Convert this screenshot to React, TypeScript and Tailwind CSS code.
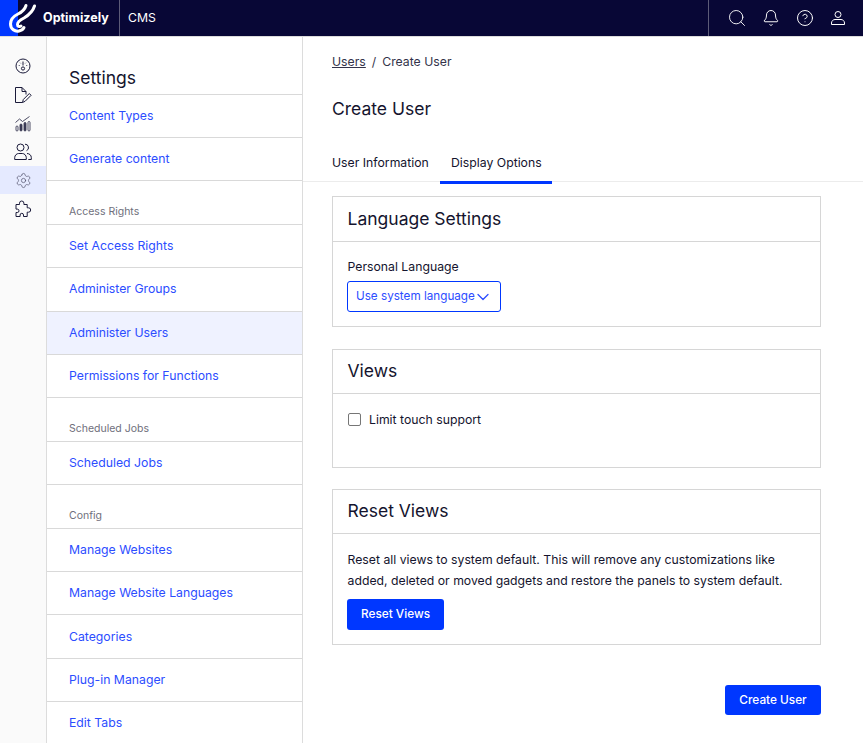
import { Bell, ChevronDown, CircleHelp, Search, Settings } from 'lucide-react'

type NavRow = { label: string; kind?: 'section' | 'active' }

const navRows: NavRow[] = [
  { label: 'Content Types' },
  { label: 'Generate content' },
  { label: 'Access Rights', kind: 'section' },
  { label: 'Set Access Rights' },
  { label: 'Administer Groups' },
  { label: 'Administer Users', kind: 'active' },
  { label: 'Permissions for Functions' },
  { label: 'Scheduled Jobs', kind: 'section' },
  { label: 'Scheduled Jobs' },
  { label: 'Config', kind: 'section' },
  { label: 'Manage Websites' },
  { label: 'Manage Website Languages' },
  { label: 'Categories' },
  { label: 'Plug-in Manager' },
  { label: 'Edit Tabs' },
]

function Logo() {
  return (
    <svg width="36" height="36" viewBox="0 0 36 36" fill="none" stroke="#fff" strokeLinecap="round" strokeWidth="3">
      <path d="M26 5.500C25 9 22 12 18 14C13 16.500 10.500 20 10.500 24C10.500 29 15 32 19 31C21 30.500 23 29.500 24 27.500" />
      <path d="M34.500 6C33 11 29 15 24 18C20 20 17.500 22 17.500 24.500C17.500 26.500 19.500 27 21 26" />
    </svg>
  )
}

function GaugeIcon() {
  return (
    <svg width="16" height="16" viewBox="0 0 16 16" fill="none" stroke="#1a1a3a" strokeWidth="1">
      <circle cx="8" cy="8" r="7" />
      <circle cx="8" cy="10.500" r="1.600" />
      <path d="M8 3.500v4M3.800 7.500h.8M11.400 7.500h.8M5.200 4.800l.5.500M10.800 4.800l-.5.500" />
    </svg>
  )
}

function EditFileIcon() {
  return (
    <svg width="18" height="18" viewBox="0 0 18 18" fill="none" stroke="#1a1a3a" strokeWidth="1">
      <path d="M8.500 16.500H1.500V1.500H8L12 5.500V8.500" />
      <path d="M8 1.500V5.500H12" />
      <path d="M8.500 16.500l.8-3 6-6 1.800 1.800-6 6z" />
    </svg>
  )
}

function ChartIcon() {
  return (
    <svg width="16" height="16" viewBox="0 0 16 16" fill="none" stroke="#3a3a55" strokeWidth="0.9">
      <path d="M.5 6.500l4-3.500 3 2.500L14.500.5" />
      <rect x="1" y="10" width="2" height="5" rx="1" />
      <rect x="5" y="8" width="2" height="7" rx="1" fill="#3a3a55" />
      <rect x="9" y="6.500" width="2" height="8.500" rx="1" fill="#3a3a55" />
      <rect x="13" y="5.500" width="2" height="9.500" rx="1" />
    </svg>
  )
}

function UsersIcon() {
  return (
    <svg width="18" height="18" viewBox="0 0 18 18" fill="none" stroke="#1a1a3a" strokeWidth="1">
      <circle cx="6.500" cy="4.500" r="3.500" />
      <path d="M11 1.200a3.400 3.400 0 0 1 1.500 6.500" />
      <path d="M.7 16.500v-1.800c0-2.400 2-4.200 4-4.200h3.600c2 0 4 1.800 4 4.200v1.800z" />
      <path d="M13 10.500c2.500 0 4.300 1.800 4.300 4v2h-3" />
    </svg>
  )
}

function PuzzleIcon() {
  return (
    <svg width="17" height="17" viewBox="0 0 17 17" fill="none" stroke="#1a1a3a" strokeWidth="1">
      <path d="M1 4.500h3.500V3.200a2.200 2.200 0 0 1 4.400 0v1.300h3.300v3.300h1.300a2.200 2.200 0 0 1 0 4.400h-1.300v4.300H8.500v-1.500a1.700 1.700 0 0 0-3.400 0v1.500H1v-4h1.300a1.700 1.700 0 0 0 0-3.400H1z" />
    </svg>
  )
}

function UserIcon() {
  return (
    <svg width="16" height="16" viewBox="0 0 16 16" fill="none" stroke="#fff" strokeWidth="1" className="shrink-0 ml-[15.500px]">
      <circle cx="8" cy="4.500" r="3" />
      <path d="M1.500 14.500v-1.500c0-2 1.700-3.500 3.500-3.500h6c1.800 0 3.500 1.500 3.500 3.500v1.500z" />
    </svg>
  )
}

function TopBar() {
  return (
    <header className="h-[37px] shrink-0 flex bg-[#080736] border-b border-[#dcdcdc] text-white">
      <div className="w-[18px] bg-[#0037ff]" />
      <div className="-ml-[18px] w-[36px] h-[36px] relative">
        <Logo />
      </div>
      <div className="w-[76px] ml-[7px] flex items-center text-[12.500px] font-bold">Optimizely</div>
      <div className="w-[1px] bg-[#5c5b78]" />
      <div className="ml-2 flex items-center text-[12.250px]">CMS</div>
      <div className="ml-auto w-[155px] border-l border-[#5c5b78] flex items-center pl-[18px]">
        <Search size={20} strokeWidth={1.1} className="shrink-0" />
        <Bell size={18} strokeWidth={1.3} className="shrink-0 ml-[15px]" />
        <CircleHelp size={18} strokeWidth={1.3} className="shrink-0 ml-[16px]" />
        <UserIcon />
      </div>
    </header>
  )
}

function Rail() {
  return (
    <div className="w-[47px] shrink-0 bg-[#fafafa] border-r border-[#dcdcdc] pt-[14px] flex flex-col text-[#1a1a3a]">
      <div className="h-[29px] flex items-center justify-center"><GaugeIcon /></div>
      <div className="h-[29px] flex items-center justify-center"><EditFileIcon /></div>
      <div className="h-[29px] flex items-center justify-center"><ChartIcon /></div>
      <div className="h-[28px] flex items-center justify-center"><UsersIcon /></div>
      <div className="h-[28px] flex items-center justify-center bg-[#e5eaff]"><Settings size={17} strokeWidth={1} className="text-[#55556f]" /></div>
      <div className="h-[29px] flex items-center justify-center"><PuzzleIcon /></div>
    </div>
  )
}

function Sidebar() {
  return (
    <nav className="w-[256px] shrink-0 border-r border-[#dcdcdc] overflow-hidden">
      <div className="h-[56.600px] pl-[22px] pt-[29px] text-[17.500px] leading-[24px] text-[#14142e]">Settings</div>
      {navRows.map((row, i) => (
        <div
          key={i}
          className={
            'h-[43.400px] border-t border-[#d9d9d9] pl-[22px] flex ' +
            (row.kind === 'section'
              ? 'items-end pb-[4px] text-[10.500px] leading-[16px] text-[#6f6f7c]'
              : 'items-center pt-[0.600px] text-[12.250px] text-[#2c4dff]') +
            (row.kind === 'active' ? ' bg-[#eff2ff]' : '')
          }
        >
          {row.label}
        </div>
      ))}
    </nav>
  )
}

function Panel({ title, tall, bodyClass, children }: { title: string; tall?: boolean; bodyClass: string; children: React.ReactNode }) {
  return (
    <section className="border border-[#d6d6d6]">
      <h2 className={(tall ? 'h-[45px]' : 'h-[44px]') + ' border-b border-[#d6d6d6] pl-[14.500px] flex items-center text-[17.500px] text-[#14142e]'}>{title}</h2>
      <div className={bodyClass}>{children}</div>
    </section>
  )
}

function Main() {
  return (
    <main className="flex-1 min-w-0 text-[#14142e]">
      <div className="pl-[29px] pt-[17px] text-[12.250px] leading-[16px] text-[#33334a]">
        <span className="underline">Users</span>
        <span className="mx-[6px]">/</span>
        <span>Create User</span>
      </div>
      <h1 className="pl-[29px] mt-[27px] text-[17.500px] leading-[24px]">Create User</h1>
      <div className="mt-[22px] h-[39px] border-b border-[#ececec] pl-[18px] flex text-[12.250px]">
        <div className="w-[119px] pl-[11px] pt-[11px]">User Information</div>
        <div className="w-[112px] h-[41px] pl-[11px] pt-[11px] border-b-[3px] border-[#0037ff]">Display Options</div>
      </div>
      <div className="ml-[29px] w-[489px] mt-[14px] flex flex-col gap-[21.500px]">
        <Panel title="Language Settings" tall bodyClass="h-[84px] pl-[14.500px] pt-[17px]">
          <div className="text-[12.250px] leading-[16px]">Personal Language</div>
          <div className="-ml-[0.500px] mt-[6px] w-[154px] h-[31px] border border-[#0037ff] rounded-[3px] pl-[8px] flex items-center whitespace-nowrap text-[11.700px] text-[#2c4dff]">
            Use system language
            <ChevronDown size={20} strokeWidth={1.5} className="shrink-0 -ml-[2px]" />
          </div>
        </Panel>
        <Panel title="Views" bodyClass="h-[73px] pl-[15px] pt-[18px]">
          <label className="flex items-center gap-[8px] text-[12.250px] leading-[16px]">
            <span className="w-[13px] h-[13px] border border-[#767676] rounded-[2px] bg-white" />
            Limit touch support
          </label>
        </Panel>
        <Panel title="Reset Views" bodyClass="h-[110px] pl-[14.500px] pt-[15px]">
          <p className="text-[12.250px] leading-[21px]">
            Reset all views to system default. This will remove any customizations like
            <br />
            added, deleted or moved gadgets and restore the panels to system default.
          </p>
          <button className="-ml-[0.500px] mt-[8px] w-[97px] h-[31px] rounded-[3px] bg-[#0037ff] text-white text-[11.800px] font-medium">Reset Views</button>
        </Panel>
      </div>
      <div className="ml-[29px] w-[489px] mt-[40px] flex justify-end">
        <button className="w-[96px] h-[30px] pt-[1px] rounded-[3px] bg-[#0037ff] text-white text-[11.800px] font-medium">Create User</button>
      </div>
    </main>
  )
}

export default function App() {
  return (
    <div className="h-[743px] overflow-hidden flex flex-col bg-white font-['Inter',sans-serif]">
      <TopBar />
      <div className="flex flex-1 min-h-0">
        <Rail />
        <Sidebar />
        <Main />
      </div>
    </div>
  )
}
